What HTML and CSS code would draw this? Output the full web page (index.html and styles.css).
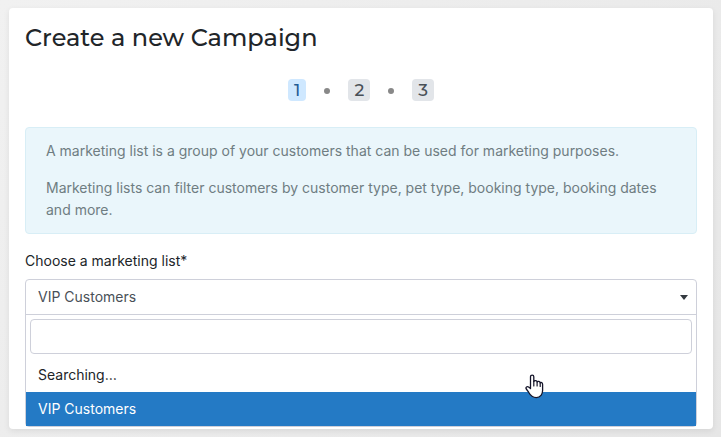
FILE: index.html
```html
<!DOCTYPE html>
<html lang="en">
<head>
    <meta charset="UTF-8">
    <meta name="viewport" content="width=device-width, initial-scale=1.0">
    <title>Create a new Campaign</title>
    <link rel="stylesheet" href="styles.css">
</head>
<body>
    <main class="card">
        <h1>Create a new Campaign</h1>

        <ol class="steps">
            <li class="step active" aria-current="step">1</li>
            <li class="dot" aria-hidden="true"></li>
            <li class="step">2</li>
            <li class="dot" aria-hidden="true"></li>
            <li class="step">3</li>
        </ol>

        <div class="info">
            <p>A marketing list is a group of your customers that can be used for marketing purposes.</p>
            <p>Marketing lists can filter customers by customer type, pet type, booking type, booking dates and more.</p>
        </div>

        <form>
            <label class="field-label" for="marketing-list">Choose a marketing list*</label>
            <div class="picker">
                <div class="select-wrap">
                    <select id="marketing-list" required>
                        <option selected>VIP Customers</option>
                    </select>
                </div>
                <div class="dropdown">
                    <div class="search">
                        <input type="search" aria-label="Search marketing lists">
                    </div>
                    <ul class="results">
                        <li class="result" role="status">Searching…</li>
                        <li><button type="button" class="result highlighted">VIP Customers</button></li>
                    </ul>
                    <svg class="pointer" width="19" height="25" viewBox="0 0 19 25" aria-hidden="true">
                        <path d="M5.5 14.5V2.8C5.5 .6 8.8 .6 8.8 2.8V7.6C9.4 6.2 12 6.4 12.2 8C13 6.8 15 7.2 15.2 8.8C16 8 17.6 8.6 17.6 10.4V16.5C17.6 20 15.5 23.6 11.3 23.6C7.4 23.6 5.3 21.2 3.6 18.2L1.3 15C.2 13.2 2.3 12 3.6 13Z" fill="#fff" stroke="#15152a" stroke-width="1.3" stroke-linejoin="round"/>
                        <path d="M8.8 7.4V12M12.1 8V12M15.2 8.8V12.4" fill="none" stroke="#15152a" stroke-width="1.2" stroke-linecap="round"/>
                    </svg>
                </div>
            </div>
        </form>
    </main>
</body>
</html>
```
FILE: styles.css
```css
* {
    box-sizing: border-box;
}
body {
    margin: 0;
    padding: 8px 8px 8px 9px;
    min-height: 100vh;
    background: linear-gradient(135deg, #f1f1f1, #e6e6e6);
    color: #212529;
    font-family: Inter, sans-serif;
    font-size: 14px;
    line-height: 22px;
}
.card {
    padding: 14px 16px 2px;
    background: #fff;
    border-radius: 4px;
    box-shadow: 0 2px 6px rgba(0, 0, 0, 0.08);
}
h1 {
    margin: 0 0 25px;
    font-family: Montserrat, Inter, sans-serif;
    font-size: 24px;
    font-weight: 500;
    line-height: 32px;
}
.steps {
    display: flex;
    justify-content: center;
    align-items: center;
    gap: 18px;
    margin: 0 0 26px;
    padding: 0;
    list-style: none;
}
.step {
    padding: 0 6px;
    background: #e2e5e9;
    border-radius: 4px;
    color: #495057;
    font-family: Montserrat, Inter, sans-serif;
    font-size: 17px;
    font-weight: 500;
}
.step.active {
    background: #cfe8ff;
    color: #1f5c94;
}
.dot {
    width: 6px;
    height: 6px;
    margin-top: 2px;
    background: #888;
    border-radius: 50%;
}
.info {
    margin-bottom: 16px;
    padding: 12px 20px;
    background: #eaf6fb;
    border: 1px solid #d8eef6;
    border-radius: 4px;
    color: #6f7d82;
}
.info p {
    margin: 0 0 15px;
}
.info p:last-child {
    margin-bottom: 0;
}
.field-label {
    display: block;
    margin-bottom: 7px;
}
.picker {
    border: 1px solid #ced0da;
    border-radius: 4px;
}
.select-wrap {
    position: relative;
    border-bottom: 1px solid #ced0da;
}
.select-wrap::after {
    content: "";
    position: absolute;
    top: 15px;
    right: 8px;
    border: 4px solid transparent;
    border-top: 5px solid #343a40;
    border-bottom: 0;
    pointer-events: none;
}
select {
    display: block;
    width: 100%;
    height: 34px;
    padding: 0 28px 0 12px;
    appearance: none;
    background: transparent;
    border: 0;
    color: #495057;
    font: inherit;
}
.dropdown {
    position: relative;
}
.search {
    padding: 4px;
}
.search input {
    display: block;
    width: 100%;
    height: 35px;
    padding: 4px 8px;
    background: #fff;
    border: 1px solid #ced0da;
    border-radius: 4px;
    font: inherit;
}
.results {
    margin: 0;
    padding: 0;
    list-style: none;
}
.result {
    display: block;
    width: 100%;
    padding: 6px 12px;
    background: none;
    border: 0;
    color: inherit;
    font: inherit;
    text-align: left;
}
.result.highlighted {
    background: #247ac5;
    color: #fff;
}
.pointer {
    position: absolute;
    top: 59px;
    right: 152px;
}
```
